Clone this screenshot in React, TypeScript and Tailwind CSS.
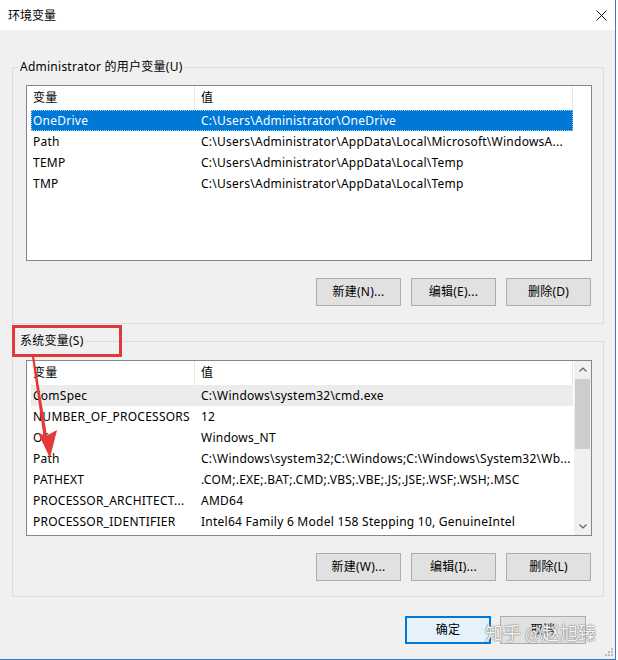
import React from "react"

type Var = { name: string; value: string; state?: "selected" | "hover" }

const userVars: Var[] = [
  { name: "OneDrive", value: "C:\\Users\\Administrator\\OneDrive", state: "selected" },
  { name: "Path", value: "C:\\Users\\Administrator\\AppData\\Local\\Microsoft\\WindowsA..." },
  { name: "TEMP", value: "C:\\Users\\Administrator\\AppData\\Local\\Temp" },
  { name: "TMP", value: "C:\\Users\\Administrator\\AppData\\Local\\Temp" },
]

const systemVars: Var[] = [
  { name: "ComSpec", value: "C:\\Windows\\system32\\cmd.exe", state: "hover" },
  { name: "NUMBER_OF_PROCESSORS", value: "12" },
  { name: "OS", value: "Windows_NT" },
  { name: "Path", value: "C:\\Windows\\system32;C:\\Windows;C:\\Windows\\System32\\Wb..." },
  { name: "PATHEXT", value: ".COM;.EXE;.BAT;.CMD;.VBS;.VBE;.JS;.JSE;.WSF;.WSH;.MSC" },
  { name: "PROCESSOR_ARCHITECT...", value: "AMD64" },
  { name: "PROCESSOR_IDENTIFIER", value: "Intel64 Family 6 Model 158 Stepping 10, GenuineIntel" },
]

const Row = ({ name, value, state }: Var) => (
  <div
    className={`ml-[4px] flex h-[21px] w-[542px] items-center whitespace-nowrap ${
      state === "selected"
        ? "bg-[#0078d7] text-white outline-1 outline-dotted -outline-offset-1 outline-[#9ccbf0]"
        : state === "hover"
        ? "bg-[#ececec]"
        : ""
    }`}
  >
    <div className="w-[164px] shrink-0 pl-[2px]">{name}</div>
    <div className="pl-[6px]">{value}</div>
  </div>
)

const Chevron = ({ up }: { up?: boolean }) => (
  <svg width="8" height="5" viewBox="0 0 8 5">
    <polyline
      points={up ? "0.5,4.5 4,1 7.5,4.5" : "0.5,0.5 4,4 7.5,0.5"}
      fill="none"
      stroke="#606060"
      strokeWidth="1.1"
    />
  </svg>
)

const Scrollbar = () => (
  <div className="flex w-[17px] shrink-0 flex-col bg-[#f0f0f0]">
    <div className="flex h-[17px] items-center justify-center">
      <Chevron up />
    </div>
    <div className="mx-[1px] mt-[1px] h-[70px] bg-[#cdcdcd]" />
    <div className="flex-1" />
    <div className="flex h-[17px] items-center justify-center">
      <Chevron />
    </div>
  </div>
)

const VarList = ({ rows, scroll }: { rows: Var[]; scroll?: boolean }) => (
  <div className="flex h-[176px] w-[566px] overflow-hidden border border-[#828790] bg-white">
    <div className="min-w-0 flex-1">
      <div className="flex h-[24px]">
        <div className="flex w-[168px] shrink-0 items-center border-r border-[#e5e5e5] pl-[6px]">变量</div>
        <div className="flex w-[378px] shrink-0 items-center border-r border-[#e5e5e5] pl-[6px]">值</div>
      </div>
      {rows.map((row, index) => (
        <Row key={index} {...row} />
      ))}
    </div>
    {scroll && <Scrollbar />}
  </div>
)

const Btn = ({ children, primary, wide }: { children: React.ReactNode; primary?: boolean; wide?: boolean }) => (
  <button
    className={`flex h-[28px] items-center justify-center ${wide ? "w-[86px]" : "w-[85px]"} ${
      primary ? "border-2 border-[#0078d7] bg-[#e5f1fb]" : "border border-[#adadad] bg-[#e1e1e1]"
    }`}
  >
    {children}
  </button>
)

const Group = ({
  title,
  rows,
  scroll,
  buttons,
  className,
  padTop,
}: {
  title: string
  rows: Var[]
  scroll?: boolean
  buttons: string[]
  className: string
  padTop: string
}) => (
  <fieldset className={`ml-[12px] w-[592px] border border-[#dcdcdc] ${className}`}>
    <legend className="ml-[5px] px-[2px] leading-[16px]">{title}</legend>
    <div className={`pl-[13px] pr-[11px] ${padTop}`}>
      <VarList rows={rows} scroll={scroll} />
      <div className="mt-[17px] flex justify-end gap-[10px] pr-[1px]">
        {buttons.map(b => (
          <Btn key={b}>{b}</Btn>
        ))}
      </div>
    </div>
  </fieldset>
)

const App = () => {
  return (
    <div className="h-[660px] w-[618px] bg-white">
      <div className="relative h-[660px] w-[616px] border-r border-b border-[#2b7cd3] bg-[#f0f0f0] font-['Noto_Sans','Noto_Sans_CJK_SC',sans-serif] text-[12px] tracking-[0.25px] text-black">
        {/* title bar */}
        <div className="flex h-[30px] items-center justify-between bg-white pl-[8px] pr-[8px]">
          <span className="font-['Noto_Sans_CJK_SC',sans-serif] tracking-normal">环境变量</span>
          <svg width="11" height="11" viewBox="0 0 11 11">
            <path d="M0.5 0.5 L10.5 10.5 M10.5 0.5 L0.5 10.5" stroke="#111" strokeWidth="1" />
          </svg>
        </div>

        <Group
          title="Administrator 的用户变量(U)"
          rows={userVars}
          buttons={["新建(N)...", "编辑(E)...", "删除(D)"]}
          className="mt-[29px] pb-[17px]"
          padTop="pt-[10px]"
        />

        <Group
          title="系统变量(S)"
          rows={systemVars}
          scroll
          buttons={["新建(W)...", "编辑(I)...", "删除(L)"]}
          className="mt-[9px] pb-[15px]"
          padTop="pt-[11px]"
        />

        <div className="mt-[19px] flex justify-end gap-[9px] pr-[29px]">
          <Btn primary wide>
            确定
          </Btn>
          <Btn wide>取消</Btn>
        </div>

        {/* size grip */}
        <svg className="absolute left-[604px] top-[647px]" width="10" height="10" viewBox="0 0 10 10">
          <rect x="7" y="1" width="2" height="2" fill="#bcbcbc" />
          <rect x="4" y="4" width="2" height="2" fill="#bcbcbc" />
          <rect x="7" y="4" width="2" height="2" fill="#bcbcbc" />
          <rect x="1" y="7" width="2" height="2" fill="#bcbcbc" />
          <rect x="4" y="7" width="2" height="2" fill="#bcbcbc" />
          <rect x="7" y="7" width="2" height="2" fill="#bcbcbc" />
        </svg>

        {/* annotation */}
        <div className="absolute left-[12px] top-[325px] h-[32px] w-[110px] border-[3px] border-[#e0393c]" />
        <svg className="pointer-events-none absolute left-0 top-0" width="616" height="660" viewBox="0 0 616 660">
          <polygon points="32,357 34.2,357 47,436 43.5,436.5" fill="#e53935" />
          <polygon points="50,458 57,430 46,436 38,433" fill="#e53935" />
        </svg>

        {/* watermark */}
        <div className="absolute left-[485px] top-[621px] whitespace-nowrap font-['Noto_Sans_CJK_SC',sans-serif] text-[18px] leading-[22px] tracking-normal text-[#f4f4f4] [text-shadow:0_0_1px_#666,0_0_2px_#888]">
          知乎 @赵旭臻
        </div>
      </div>
    </div>
  )
}

export default App
